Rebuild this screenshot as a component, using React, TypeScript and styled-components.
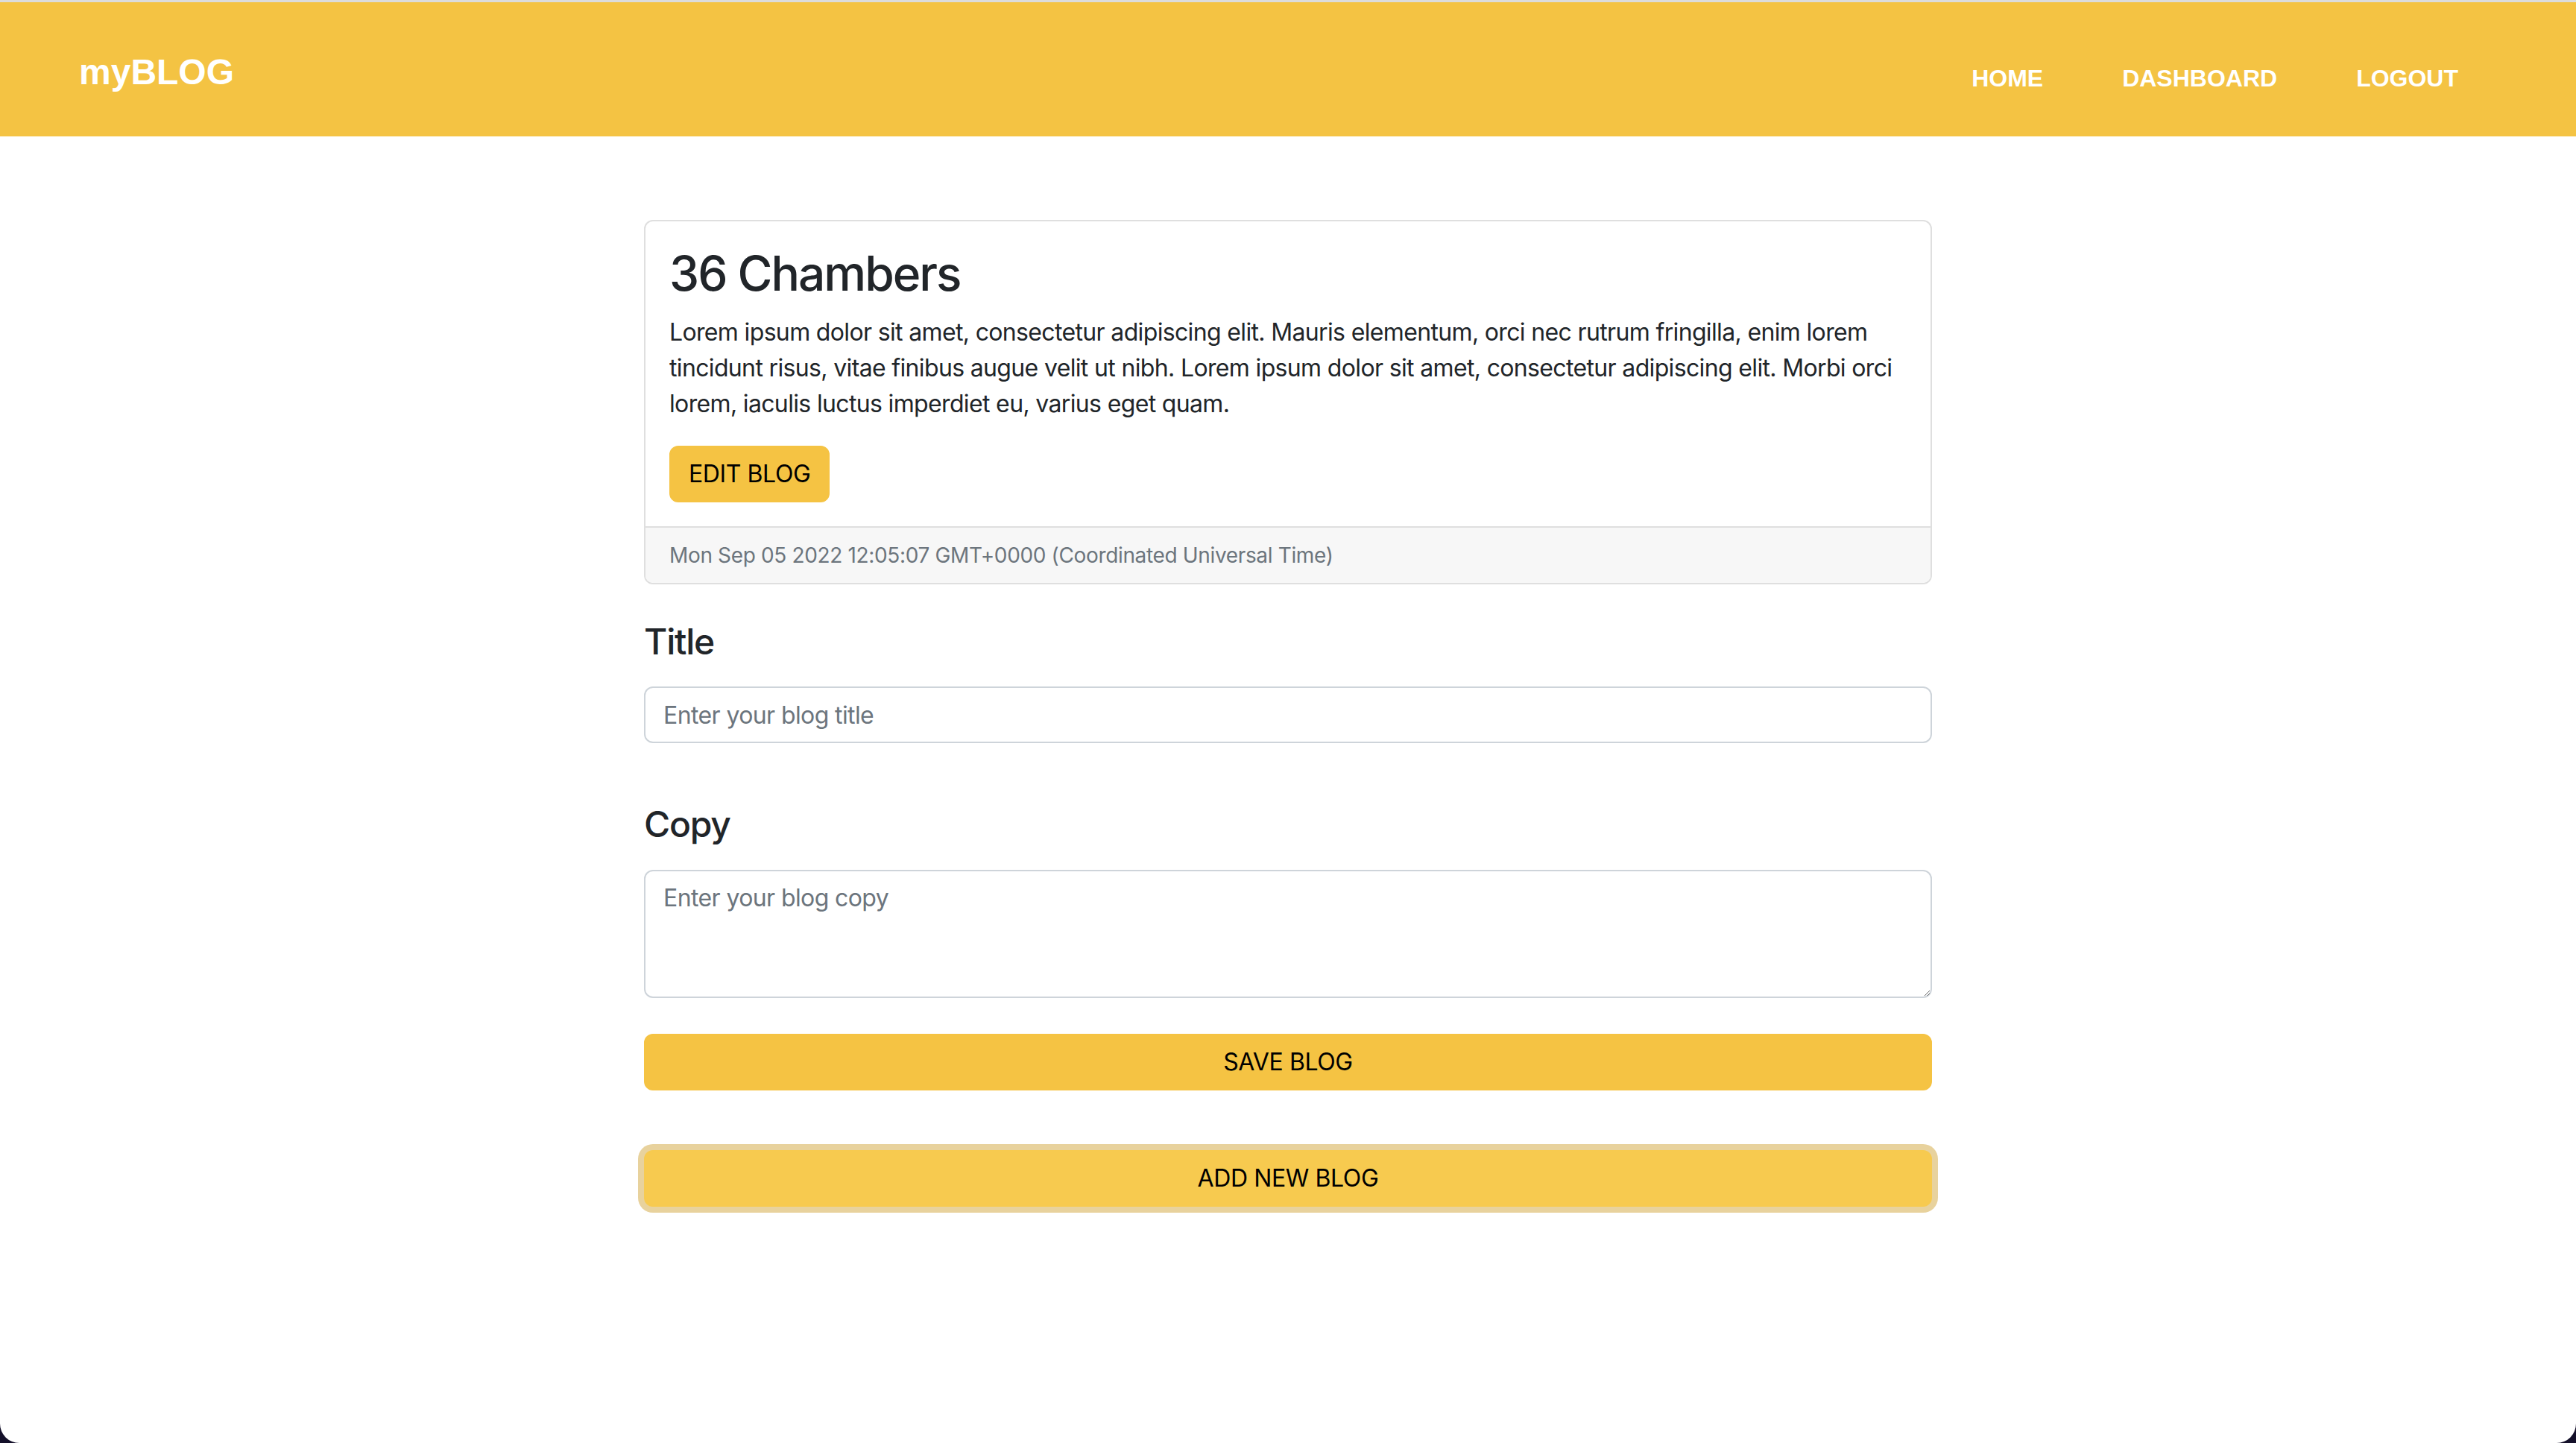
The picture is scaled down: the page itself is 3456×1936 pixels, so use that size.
import React from "react";
import styled, { createGlobalStyle } from "styled-components";

const GlobalStyle = createGlobalStyle`
  html, body {
    margin: 0;
    padding: 0;
    background: #14102a;
  }
  body {
    font-family: Inter, "Noto Sans", "Liberation Sans", sans-serif;
    color: #212529;
  }
  * { box-sizing: border-box; }
`;

const Page = styled.div`
  min-height: 1936px;
  background: #ffffff;
  border-top: 3px solid #dcdcdc;
  border-radius: 0 0 26px 26px;
  overflow: hidden;
`;

const Navbar = styled.nav`
  height: 180px;
  background: #f4c343;
  display: flex;
  align-items: center;
  justify-content: space-between;
  padding: 0 158px 0 106px;
`;

const Brand = styled.a`
  font-family: "Liberation Sans", Arial, sans-serif;
  font-weight: 700;
  font-size: 48px;
  color: #ffffff;
  text-decoration: none;
  margin-top: 6px;
`;

const NavList = styled.ul`
  list-style: none;
  margin: 25px 0 0 0;
  padding: 0;
  display: flex;
  gap: 106px;
`;

const NavLink = styled.a`
  font-family: "Liberation Sans", Arial, sans-serif;
  font-weight: 700;
  font-size: 32px;
  color: #ffffff;
  text-decoration: none;
  text-transform: uppercase;
`;

const Main = styled.main`
  width: 1728px;
  margin: 0 auto;
  padding: 112px 0 120px;
  display: flex;
  flex-direction: column;
`;

const Card = styled.section`
  border: 2px solid #dfdfdf;
  border-radius: 12px;
  overflow: hidden;
`;

const CardBody = styled.div`
  padding: 32px;
`;

const CardTitle = styled.h2`
  margin: 0 0 16px;
  font-size: 64px;
  font-weight: 500;
  line-height: 1.2;
  letter-spacing: -2px;
`;

const CardText = styled.p`
  margin: 0 0 32px;
  font-size: 32px;
  line-height: 48px;
  letter-spacing: -0.65px;
`;

const Button = styled.button<{ $block?: boolean; $focused?: boolean }>`
  display: ${(p) => (p.$block ? "block" : "inline-block")};
  width: ${(p) => (p.$block ? "100%" : "auto")};
  height: 76px;
  padding: 0 24px;
  font-family: Inter, "Noto Sans", sans-serif;
  font-size: 32px;
  letter-spacing: -0.4px;
  color: #000000;
  text-transform: uppercase;
  background: ${(p) => (p.$focused ? "#f7ca4f" : "#f5c343")};
  border: 2px solid ${(p) => (p.$focused ? "#f7ca4f" : "#f5c343")};
  border-radius: 12px;
  box-shadow: ${(p) => (p.$focused ? "0 0 0 8px #e8d29d" : "none")};
  cursor: pointer;
`;

const CardFooter = styled.footer`
  background: #f7f7f7;
  border-top: 2px solid #dfdfdf;
  padding: 16px 32px;
  font-size: 28px;
  line-height: 42px;
  color: #6c757d;
  letter-spacing: -0.35px;
`;

const FormSection = styled.div<{ $top: number }>`
  margin-top: ${(p) => p.$top}px;
  display: flex;
  flex-direction: column;
`;

const Label = styled.label`
  font-size: 48px;
  font-weight: 500;
  line-height: 1.2;
  margin-bottom: 32px;
  letter-spacing: -1.2px;
`;

const fieldStyles = `
  width: 100%;
  font-family: Inter, "Noto Sans", sans-serif;
  font-size: 32px;
  line-height: 48px;
  letter-spacing: -0.6px;
  color: #212529;
  padding: 12px 24px;
  border: 2px solid #ced4da;
  border-radius: 12px;
  background: #ffffff;
  outline: none;
  &::placeholder { color: #6c757d; }
`;

const Input = styled.input`
  ${fieldStyles}
  height: 76px;
`;

const TextArea = styled.textarea`
  ${fieldStyles}
  height: 172px;
  resize: vertical;
  display: block;
`;

const ButtonRow = styled.div<{ $top: number }>`
  margin-top: ${(p) => p.$top}px;
`;

export default function App() {
  return (
    <>
      <GlobalStyle />
      <Page>
        <Navbar>
          <Brand href="#">myBLOG</Brand>
          <NavList>
            <li><NavLink href="#">Home</NavLink></li>
            <li><NavLink href="#">Dashboard</NavLink></li>
            <li><NavLink href="#">Logout</NavLink></li>
          </NavList>
        </Navbar>
        <Main>
          <Card>
            <CardBody>
              <CardTitle>36 Chambers</CardTitle>
              <CardText>
                Lorem ipsum dolor sit amet, consectetur adipiscing elit. Mauris elementum, orci nec rutrum
                fringilla, enim lorem tincidunt risus, vitae finibus augue velit ut nibh. Lorem ipsum dolor sit
                amet, consectetur adipiscing elit. Morbi orci lorem, iaculis luctus imperdiet eu, varius eget quam.
              </CardText>
              <Button>Edit Blog</Button>
            </CardBody>
            <CardFooter>Mon Sep 05 2022 12:05:07 GMT+0000 (Coordinated Universal Time)</CardFooter>
          </Card>
          <FormSection $top={48}>
            <Label htmlFor="title">Title</Label>
            <Input id="title" placeholder="Enter your blog title" />
          </FormSection>
          <FormSection $top={80}>
            <Label htmlFor="copy">Copy</Label>
            <TextArea id="copy" placeholder="Enter your blog copy" />
          </FormSection>
          <ButtonRow $top={48}>
            <Button $block>Save Blog</Button>
          </ButtonRow>
          <ButtonRow $top={80}>
            <Button $block $focused>Add New Blog</Button>
          </ButtonRow>
        </Main>
      </Page>
    </>
  );
}
